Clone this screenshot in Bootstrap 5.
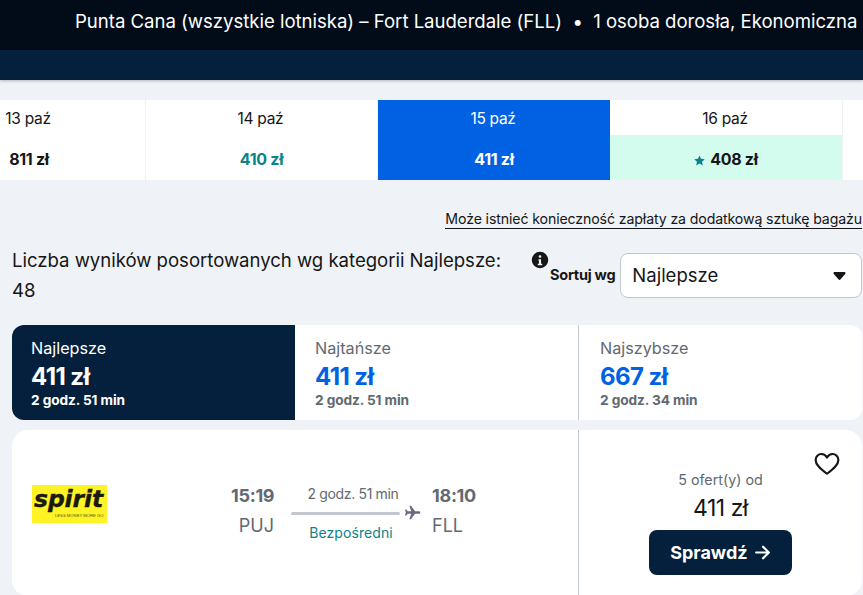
<!DOCTYPE html>
<html lang="pl">
<head>
    <meta charset="UTF-8">
    <meta name="viewport" content="width=device-width, initial-scale=1.0">
    <title>Punta Cana - Fort Lauderdale</title>
    <link href="https://cdn.jsdelivr.net/npm/bootstrap@5.3.0/dist/css/bootstrap.min.css" rel="stylesheet">
    <style>
        html, body {
            height: 595px;
            overflow: hidden;
        }
        body {
            background-color: #eff3f8;
            font-family: "Inter", "Noto Sans", sans-serif;
            color: #161616;
        }
        .top-bar {
            height: 50px;
            background: #020c18;
            color: #fff;
            font-size: 18.6px;
            padding-left: 75px;
            line-height: 43px;
            white-space: nowrap;
            letter-spacing: -.03px;
        }
        .sub-bar {
            height: 30px;
            background: #05203c;
            box-shadow: 0 1px 3px rgba(0, 0, 0, .25);
        }
        .date-strip {
            height: 80px;
            margin-top: 20px;
            background: #fff;
            overflow: hidden;
        }
        .date-cell {
            flex: 0 0 232px;
            text-align: center;
            border-right: 1px solid #eff3f8;
        }
        .date-cell:first-child {
            margin-left: -87px;
            flex-basis: 233px;
        }
        .date-cell:last-child {
            flex-basis: 233px;
        }
        .date-cell.active {
            background: #0062e3;
            color: #fff;
            border-right: 0;
        }
        .date-day {
            height: 35px;
            line-height: 37px;
            font-size: 15.5px;
            letter-spacing: -.3px;
            padding-right: 2px;
        }
        .date-price {
            height: 45px;
            line-height: 49px;
            font-size: 16px;
            font-weight: 700;
            letter-spacing: -.3px;
        }
        .price-teal { color: #0c838a; }
        .price-low { background: #d3fbee; }
        .star-icon { width: 11px; height: 11px; margin-right: 5px; vertical-align: -1px; }
        .bag-note {
            margin-top: 29px;
            height: 20px;
            padding-right: 1px;
        }
        .bag-note a {
            color: #161616;
            font-size: 14.15px;
            line-height: 20px;
            text-decoration: none;
            border-bottom: 1px solid #161616;
            display: block;
            letter-spacing: -.12px;
        }
        .sort-row {
            margin-top: 14px;
            padding: 0 1px 0 12px;
            height: 80px;
        }
        .result-count {
            width: 500px;
            flex-shrink: 0;
            font-size: 18.6px;
            line-height: 30px;
            padding-top: 2px;
            letter-spacing: -.03px;
        }
        .info-icon {
            width: 18px;
            height: 18px;
            margin: 8px 0 0 19px;
            flex-shrink: 0;
        }
        .sort-label {
            font-size: 14.5px;
            font-weight: 700;
            margin: 23px 5px 0 1px;
            line-height: 17px;
            white-space: nowrap;
            letter-spacing: -.25px;
        }
        .sort-select {
            width: 242px;
            height: 45px;
            flex-shrink: 0;
            background: #fff;
            border: 1px solid #c1c7cf;
            border-radius: 8px;
            font-size: 18.5px;
            padding: 0 15px 0 11px;
            margin-top: 10px;
        }
        .sort-caret {
            width: 13px;
            height: 8px;
        }
        .tabs-box {
            margin: 2px 1px 0 12px;
            height: 95px;
            background: #fff;
            border-radius: 12px;
            overflow: hidden;
        }
        .sort-tab {
            flex: 0 0 283px;
            padding: 12px 19px 0 20px;
            color: #626971;
        }
        .sort-tab:first-child {
            background: #05203c;
            color: #fff;
            padding-left: 19px;
        }
        .sort-tab:last-child {
            flex: 1 1 0;
            border-left: 1px solid #c1c7cf;
            padding-left: 21px;
        }
        .tab-name { font-size: 16.2px; line-height: 22px; }
        .tab-price {
            font-size: 24px;
            font-weight: 700;
            line-height: 31px;
            margin: 2px 0 -1px;
            color: #0062e3;
            letter-spacing: -.6px;
        }
        .sort-tab:first-child .tab-price { color: #fff; }
        .tab-time { font-size: 13.7px; font-weight: 700; line-height: 19px; letter-spacing: -.1px; }
        .flight-card {
            margin: 10px 1px 0 12px;
            height: 166px;
            background: #fff;
            border-radius: 16px;
            overflow: hidden;
        }
        .flight-main {
            flex: 0 0 567px;
            border-right: 1px solid #c1c7cf;
        }
        .spirit-logo {
            width: 75px;
            height: 38px;
            margin: 55px 0 0 20px;
            background: #fff325;
            color: #1a1a0a;
            flex-shrink: 0;
        }
        .spirit-word {
            font-family: "DejaVu Sans", sans-serif;
            font-style: italic;
            font-weight: 700;
            font-size: 23.5px;
            line-height: 27px;
            letter-spacing: -.1px;
            padding: 1px 0 0 2px;
            white-space: nowrap;
            -webkit-text-stroke: .4px #1a1a0a;
        }
        .spirit-tag {
            font-family: "Liberation Sans", sans-serif;
            font-size: 4.2px;
            line-height: 6px;
            white-space: nowrap;
            padding-left: 23px;
            color: #55551a;
        }
        .leg {
            margin-top: 53px;
            display: flex;
            color: #626971;
        }
        .leg-end { font-size: 18px; line-height: 30px; }
        .leg-time { font-weight: 700; letter-spacing: -.3px; line-height: 25px; }
        .leg-code { line-height: 35px; }
        .leg-from { margin-left: 124px; width: 43px; text-align: right; }
        .leg-to { margin-left: 11px; }
        .leg-mid { width: 130px; margin-left: 17px; text-align: center; font-size: 14px; }
        .leg-duration { width: 124px; line-height: 18px; padding-top: 2px; letter-spacing: -.35px; }
        .leg-line {
            display: flex;
            align-items: center;
            height: 17px;
        }
        .leg-line span {
            display: block;
            width: 109px;
            height: 3px;
            margin-top: 3px;
            background: #c1c7cf;
            border-radius: 2px;
            flex-shrink: 0;
        }
        .plane-icon { width: 17px; height: 17px; margin: 2px 0 0 4px; flex-shrink: 0; }
        .leg-stops { color: #0c838a; line-height: 20px; padding-top: 3px; width: 120px; letter-spacing: .1px; }
        .price-col {
            flex: 1 1 0;
            text-align: center;
            position: relative;
            padding-top: 39px;
        }
        .offer-count { font-size: 14.3px; line-height: 22px; color: #626971; }
        .offer-price { font-size: 23px; line-height: 34px; letter-spacing: -.5px; }
        .check-btn {
            width: 143px;
            height: 45px;
            margin-top: 5px;
            padding: 0;
            background: #05203c;
            border: 0;
            border-radius: 8px;
            color: #fff;
            font-size: 18px;
            font-weight: 700;
        }
        .check-btn:hover { background: #05203c; color: #fff; }
        .arrow-icon { width: 17px; height: 17px; vertical-align: -2px; margin-left: 2px; }
        .heart-icon {
            position: absolute;
            top: 21px;
            right: 22px;
            width: 26px;
            height: 26px;
        }
    </style>
</head>
<body>
    <div class="top-bar">Punta Cana (wszystkie lotniska) – Fort Lauderdale (FLL) &nbsp;•&nbsp; 1 osoba dorosła, Ekonomiczna</div>
    <div class="sub-bar"></div>

    <div class="date-strip d-flex">
        <div class="date-cell">
            <div class="date-day">13 paź</div>
            <div class="date-price">811 zł</div>
        </div>
        <div class="date-cell">
            <div class="date-day">14 paź</div>
            <div class="date-price price-teal">410 zł</div>
        </div>
        <div class="date-cell active">
            <div class="date-day">15 paź</div>
            <div class="date-price">411 zł</div>
        </div>
        <div class="date-cell">
            <div class="date-day">16 paź</div>
            <div class="date-price price-low">
                <svg class="star-icon" viewBox="0 0 24 24"><path fill="#0c838a" d="M12 1l3.400 7.400 8.100.9-6 5.500 1.700 8L12 18.700l-7.200 4.100 1.700-8-6-5.500 8.100-.9z"/></svg>408 zł
            </div>
        </div>
    </div>

    <div class="bag-note d-flex justify-content-end">
        <a href="#">Może istnieć konieczność zapłaty za dodatkową sztukę bagażu</a>
    </div>

    <div class="sort-row d-flex">
        <div class="result-count">Liczba wyników posortowanych wg kategorii Najlepsze: 48</div>
        <svg class="info-icon" viewBox="0 0 24 24"><path fill="#161616" fill-rule="evenodd" d="M12 1a11 11 0 1 0 0 22 11 11 0 0 0 0-22zm0 4.500a1.800 1.800 0 1 1 0 3.600 1.800 1.800 0 0 1 0-3.600zM10 11h3.400v6H15v2H9v-2h1.600v-4H10z"/></svg>
        <div class="sort-label">Sortuj wg</div>
        <div class="sort-select d-flex align-items-center justify-content-between">
            <span>Najlepsze</span>
            <svg class="sort-caret" viewBox="0 0 13 8"><path fill="#161616" d="M.5 1.200C.5.400 1 0 1.700 0h9.600c.7 0 1.200.4 1.200 1.200 0 .3-.1.500-.3.800L7.400 7.500c-.5.600-1.300.6-1.800 0L.8 2c-.2-.3-.3-.5-.3-.8z"/></svg>
        </div>
    </div>

    <div class="tabs-box d-flex">
        <div class="sort-tab">
            <div class="tab-name">Najlepsze</div>
            <div class="tab-price">411 zł</div>
            <div class="tab-time">2 godz. 51 min</div>
        </div>
        <div class="sort-tab">
            <div class="tab-name">Najtańsze</div>
            <div class="tab-price">411 zł</div>
            <div class="tab-time">2 godz. 51 min</div>
        </div>
        <div class="sort-tab">
            <div class="tab-name">Najszybsze</div>
            <div class="tab-price">667 zł</div>
            <div class="tab-time">2 godz. 34 min</div>
        </div>
    </div>

    <div class="flight-card d-flex">
        <div class="flight-main d-flex">
            <div class="spirit-logo">
                <div class="spirit-word">spirit</div>
                <div class="spirit-tag">LESS MONEY MORE GO.</div>
            </div>
            <div class="leg">
                <div class="leg-end leg-from">
                    <div class="leg-time">15:19</div>
                    <div class="leg-code">PUJ</div>
                </div>
                <div class="leg-mid">
                    <div class="leg-duration">2 godz. 51 min</div>
                    <div class="leg-line">
                        <span></span>
                        <svg class="plane-icon" viewBox="0 0 24 24"><path fill="#68697f" d="M23 12c0-1-1-1.800-2.200-1.800h-5.300L9.800 2.500H7.500l2.800 7.700H5.200L3.200 7.800H1.300L2.600 12l-1.300 4.200h1.900l2-2.400h5.100l-2.800 7.700h2.300l5.700-7.700h5.300C22 13.800 23 13 23 12z"/></svg>
                    </div>
                    <div class="leg-stops">Bezpośredni</div>
                </div>
                <div class="leg-end leg-to">
                    <div class="leg-time">18:10</div>
                    <div class="leg-code">FLL</div>
                </div>
            </div>
        </div>
        <div class="price-col">
            <svg class="heart-icon" viewBox="0 0 24 24"><path fill="none" stroke="#161616" stroke-width="2" stroke-linejoin="round" d="M12 21C6 16.500 1.500 12.800 1.500 8.200 1.500 5 4 2.800 6.800 2.800c2.100 0 4 1.100 5.200 3.200 1.200-2.100 3.100-3.200 5.200-3.200 2.800 0 5.300 2.200 5.300 5.400 0 4.600-4.500 8.300-10.500 12.800z"/></svg>
            <div class="offer-count">5 ofert(y) od</div>
            <div class="offer-price">411 zł</div>
            <button class="btn check-btn">Sprawdź <svg class="arrow-icon" viewBox="0 0 16 16"><path fill="none" stroke="#fff" stroke-width="2" stroke-linecap="round" stroke-linejoin="round" d="M2 8h12M8.500 2.500 14 8l-5.500 5.500"/></svg></button>
        </div>
    </div>

    <script src="https://cdn.jsdelivr.net/npm/bootstrap@5.3.0/dist/js/bootstrap.bundle.min.js"></script>
</body>
</html>
